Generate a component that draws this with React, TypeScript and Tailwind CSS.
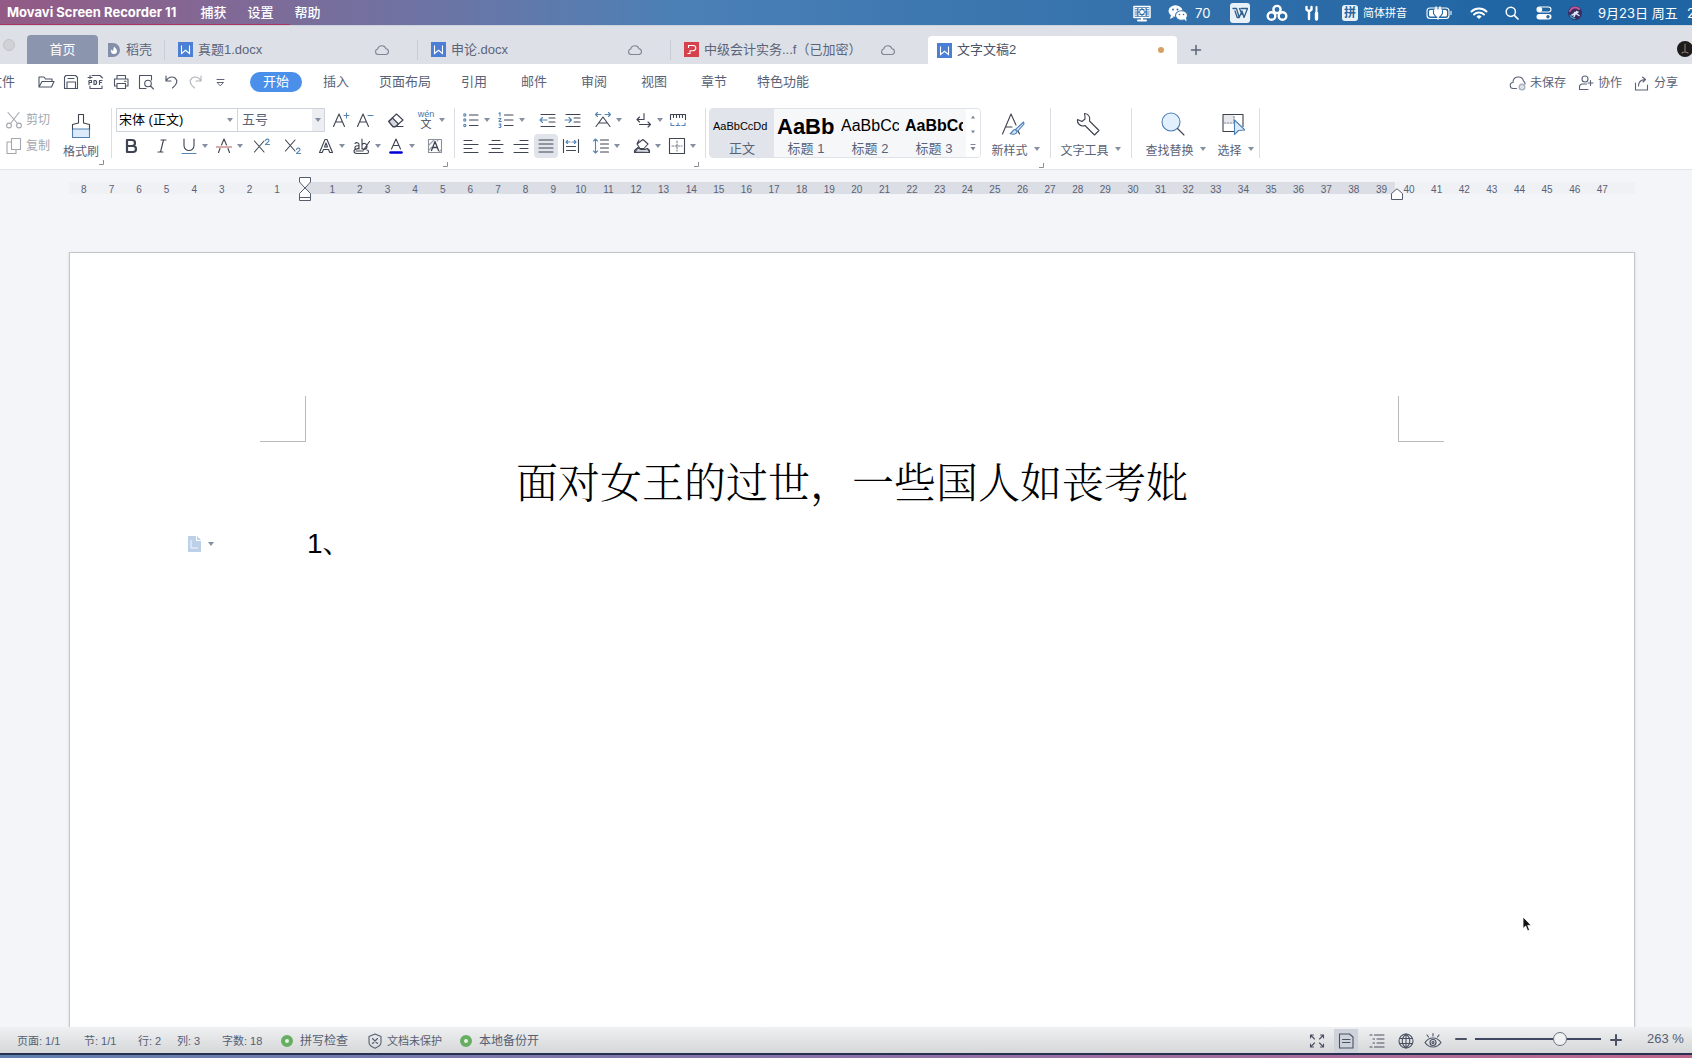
import type { ReactNode } from "react";

type IconProps = {
  children: ReactNode;
  box?: string;
  className?: string;
};

function Icon({ children, box = "0 0 18 18", className = "size-[18px]" }: IconProps) {
  return (
    <svg
      viewBox={box}
      className={`shrink-0 ${className}`}
      fill="none"
      stroke="currentColor"
      strokeWidth="1.1"
      strokeLinecap="round"
      strokeLinejoin="round"
      aria-hidden="true"
    >
      {children}
    </svg>
  );
}

function Caret() {
  return (
    <svg viewBox="0 0 8 6" className="ml-[3px] w-2 h-1.5 shrink-0" aria-hidden="true">
      <path d="M1 1h6L4 5z" fill="#8790a3" />
    </svg>
  );
}

function Corner() {
  return (
    <svg viewBox="0 0 5 5" className="size-[5px]" fill="none" stroke="#8a8f9a" aria-hidden="true">
      <path d="M4.500 0v4.500H0" />
    </svg>
  );
}

type ToolProps = {
  label: string;
  width: string;
  caret?: boolean;
  children: ReactNode;
};

function Tool({ label, width, caret, children }: ToolProps) {
  return (
    <button aria-label={label} className={`flex h-6 shrink-0 items-center ${width}`}>
      <Icon>{children}</Icon>
      {caret && <Caret />}
    </button>
  );
}

function Cloud() {
  return (
    <Icon box="0 0 16 12" className="h-3 w-4 text-[#7f8594]">
      <path d="M4 10.500a2.800 2.800 0 0 1-.3-5.500A4.300 4.300 0 0 1 12 4.800a2.900 2.900 0 0 1 .2 5.700z" />
    </Icon>
  );
}

function DocBadge({ pdf }: { pdf?: boolean }) {
  return (
    <svg viewBox="0 0 15 15" className="size-[15px] shrink-0" fill="none" stroke="#fff" strokeWidth="1.100" aria-hidden="true">
      <rect width="15" height="15" fill={pdf ? "#d5424b" : "#4b7fd6"} stroke="none" />
      {pdf ? (
        <path d="M4.500 6V3.500h4.700a2.600 2.600 0 0 1 0 5.200H6v2.800H3.500" />
      ) : (
        <path d="M3.500 3.500v8l4-3.200 4 3.200v-8" />
      )}
    </svg>
  );
}

function MenuBar() {
  return (
    <header className="flex h-[25px] shrink-0 items-center overflow-hidden bg-linear-to-r from-[#935a85] via-[#4a80b6] via-40% to-[#1f65a3] to-90% font-['Inter','Noto_Sans_CJK_SC',sans-serif] text-[13px] leading-6 text-white">
      <nav className="flex h-full w-[290px] shrink-0 items-center gap-5 border-b border-[#a8375f] pl-[7px] whitespace-nowrap">
        <button className="w-[173px] shrink-0 text-left font-bold">Movavi Screen Recorder 11</button>
        <button className="w-[27px] shrink-0 font-medium">捕获</button>
        <button className="w-[27px] shrink-0 font-medium">设置</button>
        <button className="w-[27px] shrink-0 font-medium">帮助</button>
      </nav>
      <div className="ml-auto flex shrink-0 items-center">
        <div className="w-[36px]">
          <Icon box="0 0 20 18" className="h-[18px] w-5">
            <path d="M2 2.500h16v11H2z" strokeWidth="1.500" />
            <path d="M4 4v8.500M16 4v8.500" strokeDasharray="1.200 1" strokeWidth="2.500" strokeLinecap="butt" />
            <path d="M7 7V4.500h2m2 0h2V7m0 2v2.500h-2m-2 0H7V9" />
            <circle cx="10" cy="8" r="2" fill="#fff" stroke="none" />
            <path d="M10 14v2M6 16.500h8" strokeWidth="2" />
          </Icon>
        </div>
        <div className="flex w-[62px] items-center gap-[7px]">
          <Icon box="0 0 20 18" className="h-[18px] w-5">
            <ellipse cx="7.500" cy="7" rx="7" ry="5.800" fill="#fff" stroke="none" />
            <path d="M3 11l-1 4 4-2z" fill="#fff" stroke="none" />
            <ellipse cx="13.500" cy="11.500" rx="6" ry="4.800" fill="#fff" stroke="#3a76ad" />
            <path d="M16 15l2.500 2.500-.5-4z" fill="#fff" stroke="none" />
            <g fill="#2d6ea8" stroke="none">
              <circle cx="5" cy="5.500" r="1" />
              <circle cx="9.500" cy="5.500" r="1" />
              <circle cx="11.500" cy="10.500" r=".8" />
              <circle cx="15.500" cy="10.500" r=".8" />
            </g>
          </Icon>
          <span>70</span>
        </div>
        <div className="w-[36px]">
          <Icon box="0 0 20 20" className="size-5">
            <rect width="20" height="20" rx="3" fill="#e9f1f8" stroke="none" />
            <path d="M3 5.500h3.500l2.700 9 2.800-6.500 2 6.500 3.500-9H11M5 8l2.200 6.500h2M9.500 5.500l2.500 6" stroke="#2f5f8c" strokeWidth="1.300" />
          </Icon>
        </div>
        <div className="w-[38px]">
          <Icon box="0 0 22 18" className="h-[18px] w-[22px]">
            <g strokeWidth="2.400">
              <circle cx="11" cy="5.500" r="3.600" />
              <circle cx="5.500" cy="12" r="3.800" />
              <circle cx="16.500" cy="12" r="3.800" />
            </g>
          </Icon>
        </div>
        <div className="w-[38px]">
          <Icon box="0 0 16 16" className="size-4">
            <path d="M2.500 2v2.500L5 6.500l2.500-2V2M5 6.500V14" strokeWidth="2.400" />
            <path d="M12.500 2v4" strokeWidth="2" />
            <path d="M12.500 8v6" strokeWidth="3.400" />
          </Icon>
        </div>
        <div className="flex w-[84px] items-center gap-[5px] text-[11px] whitespace-nowrap">
          <span className="flex size-4 items-center justify-center rounded-[3px] bg-[#e9f1f8] text-[12px] font-bold text-[#24659f]">拼</span>
          <span>简体拼音</span>
        </div>
        <div className="w-[44px]">
          <Icon box="0 0 27 14" className="h-3.5 w-[27px]">
            <rect x="1" y="2" width="22" height="10.500" rx="3" />
            <rect x="3" y="4" width="18" height="6.500" rx="1.500" fill="#fff" stroke="none" />
            <path d="M10 1v3M14 1v3M8.500 4h7v2.500L13.500 9.500h-3L8.500 6.500zM12 9v4" fill="#fff" stroke="#fff" strokeWidth="1.500" />
            <path d="M7.500 4.500v3l2.500 3.500M16.500 4.500v3l-2.500 3.500" stroke="#24659f" />
            <path d="M25 5.500v3" />
          </Icon>
        </div>
        <div className="w-[35px]">
          <Icon box="0 0 18 14" className="h-3.5 w-[18px]">
            <path d="M1.500 5.500a11 11 0 0 1 15 0M4 8.500a7.300 7.300 0 0 1 10 0" strokeWidth="2" />
            <path d="M9 13l-2.600-2.500a3.800 3.800 0 0 1 5.200 0z" fill="#fff" stroke="none" />
          </Icon>
        </div>
        <div className="w-[31px]">
          <Icon box="0 0 14 14" className="size-3.5">
            <circle cx="5.800" cy="5.800" r="4.600" strokeWidth="1.500" />
            <path d="M9.300 9.300L13 13" strokeWidth="1.700" />
          </Icon>
        </div>
        <div className="w-[32px]">
          <Icon box="0 0 16 14" className="h-3.5 w-4">
            <rect x="1" y="1" width="14" height="5" rx="2.500" />
            <circle cx="3.700" cy="3.500" r="2" fill="#fff" />
            <rect x=".5" y="8" width="15" height="5.500" rx="2.700" fill="#fff" stroke="none" />
            <circle cx="12" cy="10.700" r="1.700" fill="#24659f" stroke="none" />
          </Icon>
        </div>
        <div className="w-[30px]">
          <Icon box="0 0 14 14" className="size-3.5">
            <circle cx="7" cy="7" r="7" fill="#3a2c5e" stroke="none" />
            <path d="M2 5a5.500 5.500 0 0 1 9-2" stroke="#c9569a" strokeWidth="2" />
            <path d="M4 9l6-3M6 10.500l2.500-5M6.500 6.500l4.500 3" stroke="#dfeafc" strokeWidth="1.500" />
            <path d="M2 9.500a5.500 5.500 0 0 0 5 3" stroke="#41a7d8" />
          </Icon>
        </div>
        <span className="w-[89px] shrink-0 whitespace-nowrap">9月23日 周五</span>
        <span className="w-[5px] overflow-hidden">2</span>
      </div>
    </header>
  );
}

const openTabs = [
  { name: "真题1.docx" },
  { name: "申论.docx" },
  { name: "中级会计实务...f（已加密）", pdf: true },
];

function TabBar() {
  return (
    <div className="flex h-[39px] shrink-0 items-end overflow-hidden border-t border-[#cdd3dd] bg-[#dde0e7] text-[13px] text-[#5c6479]">
      <div className="flex w-[27px] shrink-0 items-center self-stretch pl-[3px]">
        <span className="size-3 rounded-full border border-[#c0c2c8] bg-[#d0d2d7]" />
      </div>
      <button className="h-[29px] w-[71px] shrink-0 rounded-t bg-[#8c95ae] text-white">首页</button>
      <button className="flex h-[29px] w-[66px] shrink-0 items-center gap-1.5 pl-2.5">
        <svg viewBox="0 0 12 14" className="h-3.5 w-3 shrink-0" aria-hidden="true">
          <path d="M0 0h5a7 7 0 0 1 0 14H0z" fill="#8490aa" />
          <path d="M6 3.500c1.500 1.500 3 3 3 4.500a3 3 0 0 1-6 0V6.500L5 8z" fill="#fff" />
        </svg>
        稻壳
      </button>
      {openTabs.map((tab) => (
        <div key={tab.name} className="flex h-[29px] w-[253px] shrink-0 items-center">
          <span className="h-5 w-px bg-[#c9cdd6]" />
          <button className="flex flex-1 items-center gap-[5px] pl-[13px] whitespace-nowrap">
            <DocBadge pdf={tab.pdf} />
            {tab.name}
          </button>
          <span className="pr-[27px]">
            <Cloud />
          </span>
        </div>
      ))}
      <div className="ml-[5px] flex h-7 w-[249px] shrink-0 items-center rounded-t bg-white pl-[9px]">
        <button className="flex flex-1 items-center gap-[5px] whitespace-nowrap text-[#4d5467]">
          <DocBadge />
          文字文稿2
        </button>
        <span className="mr-[13px] size-1.5 rounded-full bg-[#d8a062]" />
      </div>
      <button aria-label="新建标签" className="flex h-[29px] w-[38px] shrink-0 items-center justify-center">
        <Icon box="0 0 12 12" className="size-3">
          <path d="M6 1.500v9M1.500 6h9" strokeWidth="1.500" />
        </Icon>
      </button>
      <div className="ml-auto flex w-[15px] shrink-0 self-stretch overflow-hidden pt-[15px]">
        <Icon box="0 0 16 16" className="size-4">
          <circle cx="8" cy="8" r="8" fill="#1d1b1b" stroke="none" />
          <path d="M8 3v8M5 12c2-2 4-1 6 0" stroke="#8d7c6c" />
        </Icon>
      </div>
    </div>
  );
}

const menus = [
  { name: "插入", width: "w-[60px]" },
  { name: "页面布局", width: "w-[78px]" },
  { name: "引用", width: "w-[60px]" },
  { name: "邮件", width: "w-[60px]" },
  { name: "审阅", width: "w-[60px]" },
  { name: "视图", width: "w-[60px]" },
  { name: "章节", width: "w-[60px]" },
  { name: "特色功能", width: "w-[78px]" },
];

function MenuRow() {
  return (
    <div className="flex h-9 shrink-0 items-center overflow-hidden text-[13px] text-[#5a6277]">
      <button className="-ml-[11px] w-12 shrink-0 text-left">文件</button>
      <div className="flex w-[209px] shrink-0 text-[#4d5466]">
        <Tool label="打开" width="w-[25px]">
          <path d="M2 14V4h5l1.500 2H15v2.500M2 14l3-5.500h12L14.500 14z" />
        </Tool>
        <Tool label="保存" width="w-[25px]">
          <path d="M2.500 4l1.500-1.500h9.500l2 2v11h-13zM5 15.500V9h8.500v6.500M6 5.500h6" />
        </Tool>
        <Tool label="输出为PDF" width="w-[25px]">
          <path d="M5 2.500h8l2.500 2.500M3 13v2.500h12V13M1 4.500h4M3 2.500v3" />
          <path d="M2 11.500V7.500h2.500v2H2M7 7.500v4h1.500l1-1v-2l-1-1zM12.500 11.500v-4H15M12.500 9.500h2" strokeWidth="1.200" />
        </Tool>
        <Tool label="打印" width="w-[25px]">
          <path d="M5 6V2.500h8.500V6M5 13H2.500V6H16v7h-2.500M5 10.500h8.500v5H5zM12.500 8.200h1.500" />
        </Tool>
        <Tool label="打印预览" width="w-[25px]">
          <path d="M9 15.500H2.500v-13h12V7" />
          <circle cx="11" cy="10.500" r="3.300" />
          <path d="M13.500 13l3 3" />
        </Tool>
        <Tool label="撤销" width="w-[25px]">
          <path d="M4 3v5h5M4 8c2-4 6-5 9-3 3 2.500 2.500 6-2.500 10" />
        </Tool>
        <div className="flex text-[#b0b3ba]">
          <Tool label="恢复" width="w-[25px]">
            <path d="M14 3v5H9M14 8c-2-4-6-5-9-3-3 2.500-2.500 6 2.500 10" />
          </Tool>
        </div>
        <Tool label="自定义快速访问工具栏" width="w-[25px]">
          <path d="M5 6.500h7M5.500 9.500h6l-3 3z" strokeWidth=".9" />
        </Tool>
      </div>
      <nav className="flex shrink-0 items-center whitespace-nowrap">
        <button className="mx-1 h-5 w-[52px] rounded-full bg-[#4a90ea] text-white">开始</button>
        {menus.map((menu) => (
          <button key={menu.name} className={menu.width}>
            {menu.name}
          </button>
        ))}
      </nav>
      <div className="ml-auto flex shrink-0 gap-[11px] pt-0.5 pr-3.5 text-[12px] whitespace-nowrap">
        <button className="flex items-center gap-[3px]">
          <Icon>
            <path d="M7.500 14.500H4.500a3 3 0 0 1-.500-6C4 2 13 1 14.500 7a3.400 3.400 0 0 1 1.500 3" />
            <circle cx="13" cy="13" r="3.500" fill="#a9b0bf" stroke="none" />
            <circle cx="13" cy="13" r="1.300" stroke="#fff" />
          </Icon>
          未保存
        </button>
        <button className="flex items-center gap-[3px]">
          <Icon>
            <circle cx="8" cy="5" r="3" />
            <path d="M11 15.500H2.500V13c0-2 1.500-3 3-3h4M13.500 6.500v5M11 9h5" />
          </Icon>
          协作
        </button>
        <button className="flex items-center gap-[3px]">
          <Icon>
            <path d="M2.500 9v7h12v-5M5.500 12c0-4 2.500-6.500 7-6.500M9.500 3l3 2.500L10 8" />
          </Icon>
          分享
        </button>
      </div>
    </div>
  );
}

const styleCells = [
  { name: "正文", sample: "text-[11px]", text: "AaBbCcDd", active: true },
  { name: "标题 1", sample: "text-[22px] font-bold", text: "AaBb" },
  { name: "标题 2", sample: "text-[16px]", text: "AaBbCc" },
  { name: "标题 3", sample: "text-[16px] font-bold", text: "AaBbCc" },
];

function BigTool({ label, width, children }: { label: string; width: string; children: ReactNode }) {
  return (
    <button className={`flex shrink-0 flex-col gap-1.5 pt-1 ${width}`}>
      <span className="flex w-full justify-center pr-1.5">
        <Icon box="0 0 24 24" className="size-6">
          {children}
        </Icon>
      </span>
      <span className="flex w-full items-center justify-center text-[12px] leading-[18px] whitespace-nowrap">
        {label}
        <span className="flex pb-1 pl-0.5">
          <Caret />
        </span>
      </span>
    </button>
  );
}

function Divider() {
  return <span className="h-[50px] w-px shrink-0 bg-[#dcdee3]" />;
}

function Ribbon() {
  return (
    <div className="flex h-[70px] shrink-0 overflow-hidden border-b border-[#e3e5ea] pt-2 text-[#3f4452]">
      <div className="flex w-[111px] shrink-0 pl-[5px]">
        <div className="flex w-[58px] flex-col gap-0.5 text-[12px] text-[#a3a6ad]">
          <button className="flex h-6 items-center gap-[3px] whitespace-nowrap">
            <Icon>
              <path d="M3 1.500L12.500 12.500M14 1.500L5.500 12.500" />
              <circle cx="4" cy="14.500" r="2.400" />
              <circle cx="14" cy="14.500" r="2.400" />
            </Icon>
            剪切
          </button>
          <button className="flex h-6 items-center gap-[3px] whitespace-nowrap">
            <Icon>
              <path d="M6.500 1.500h9v11h-9zM6.500 5H2v11.500h9v-4" />
            </Icon>
            复制
          </button>
        </div>
        <button className="flex w-9 flex-col items-center gap-1 pt-[5px] text-[12px] leading-[18px] whitespace-nowrap text-[#5a6277]">
          <Icon box="0 0 20 26" className="h-[26px] w-5 text-[#3d424d]">
            <path d="M1.500 16h17v8.500h-17z" fill="#dcebfa" stroke="#4f7fb5" />
            <path d="M1.500 16v-4.500l6-1.500V1.500h5V10l6 1.500V16" />
          </Icon>
          格式刷
        </button>
        <div className="self-end pb-1">
          <Corner />
        </div>
      </div>
      <Divider />

      <div className="flex w-[342px] shrink-0 flex-col gap-0.5 pl-1">
        <div className="flex h-6 items-center">
          <div className="mr-[7px] flex h-6 w-[209px] shrink-0 items-center border border-[#cfd3db] text-[13px]">
            <select aria-label="字体" className="h-full w-[106px] appearance-none pl-0.5 text-black outline-none">
              <option>宋体 (正文)</option>
            </select>
            <Caret />
            <select aria-label="字号" className="ml-[3px] h-full min-w-0 flex-1 appearance-none border-l border-[#cfd3db] pl-1 text-[#5a6277] outline-none">
              <option>五号</option>
            </select>
            <span className="flex h-full w-3 items-center bg-[#eceef2]">
              <span className="-ml-px flex">
                <Caret />
              </span>
            </span>
          </div>
          <Tool label="增大字号" width="w-[24px]">
            <path d="M1.500 15.500L7 3l5.500 12.500M3.500 11h7" />
            <path d="M12 4.500h5M14.500 2v5" stroke="#5585b5" />
          </Tool>
          <Tool label="减小字号" width="w-[31px]">
            <path d="M1.500 15.500L7 3l5.500 12.500M3.500 11h7" />
            <path d="M12 4.500h5" stroke="#5585b5" />
          </Tool>
          <Tool label="清除格式" width="w-[30px]">
            <path d="M1.500 10.500l8-7.500 6.500 6-8 7H6zM10 15.500h6" />
            <path d="M5.500 7l6 6-3 2.500H6L2 10.500z" fill="#d5d8de" />
          </Tool>
          <button aria-label="拼音指南" className="flex h-6 w-[30px] shrink-0 items-center">
            <span className="flex w-[18px] flex-col items-center text-[9px] leading-[9px]">
              <span className="text-[#3f78ac]">wén</span>
              <span className="text-[11px] leading-[11px]">文</span>
            </span>
            <Caret />
          </button>
        </div>
        <div className="flex h-6 pl-[6px]">
          <Tool label="加粗" width="w-[31px]">
            <path d="M5 3h5a3 3 0 0 1 0 6H5zM5 9h6a3 3 0 0 1 0 6H5z" strokeWidth="2.200" />
          </Tool>
          <Tool label="倾斜" width="w-[27px]">
            <path d="M8 3h5M5 15h5M10.500 3l-3 12" />
          </Tool>
          <Tool label="下划线" width="w-[35px]" caret>
            <path d="M4 2v6.500a4.800 4.800 0 0 0 10 0V2" />
            <path d="M2 16.500h14" stroke="#5585b5" />
          </Tool>
          <Tool label="删除线" width="w-[38px]" caret>
            <path d="M3.500 15.500L5 11.500M6.500 8L9 2l2.500 6M13 11.500l1.500 4" />
            <path d="M1.500 10h15" stroke="#b4585d" />
          </Tool>
          <Tool label="上标" width="w-[31px]">
            <path d="M1.500 4l9.500 11M11 4L1.500 15" />
            <path d="M12.500 3.500c.5-2 3.500-1.700 3.500.2 0 1.200-2 2-3.500 3.800h4" stroke="#5585b5" />
          </Tool>
          <Tool label="下标" width="w-[33px]">
            <path d="M1.500 3l9.500 11M11 3L1.500 14" />
            <path d="M12.500 12.500c.5-2 3.500-1.700 3.500.2 0 1.200-2 2-3.500 3.800h4" stroke="#5585b5" />
          </Tool>
          <Tool label="文字效果" width="w-[36px]" caret>
            <path d="M2.500 15.500L8 2.500h2l5.500 13h-2.700l-1.300-3h-5l-1.300 3zM7.500 10h3L9 6z" />
          </Tool>
          <Tool label="突出显示" width="w-[34px]" caret>
            <path d="M2 6.500c1-1.500 4-1 4 1V12M6 8.500C1 8.500 1 12 3.500 12 5 12 6 11 6 10M9 2v10M9 8c1-2.500 5-2 5 1.500S10 13 9 11M16.500 4.500L10.500 13M3 14h7M4 12c-4 0-4 4.500 0 4.500h10c2 0 2-3.500 0-3.500" />
          </Tool>
          <Tool label="字体颜色" width="w-[39px]" caret>
            <path d="M4.500 12L9 2l4.500 10M6 8.500h6" />
            <path d="M3.500 15.500h11" stroke="#0000d6" strokeWidth="2.600" />
          </Tool>
          <Tool label="字符底纹" width="w-[18px]">
            <path d="M2.500 2.500h13v13h-13z" stroke="#8b909b" />
            <path d="M3 8l5-5M3 13l3-3M13 15l2-2M11 4l1-1" stroke="#9ba0ab" />
            <path d="M5.500 13.500L9 4.500l3.500 9M7 10.500h4" strokeWidth="1.300" />
          </Tool>
        </div>
        <div className="flex justify-end pt-0.5 pr-1.5">
          <Corner />
        </div>
      </div>
      <Divider />

      <div className="flex w-[250px] shrink-0 flex-col gap-0.5 pl-[7px]">
        <div className="flex h-6">
          <Tool label="项目符号" width="w-[35px]" caret>
            <path d="M7.500 4H16M7.500 9H16M7.500 14.500H16" />
            <g stroke="#5585b5">
              <circle cx="2.800" cy="4" r="1.100" />
              <circle cx="2.800" cy="9" r="1.100" />
              <circle cx="2.800" cy="14.500" r="1.100" />
            </g>
          </Tool>
          <Tool label="编号" width="w-[41px]" caret>
            <path d="M7.500 4H16M7.500 9H16M7.500 14.500H16" />
            <path d="M2 2.500l1-.8V5M1.800 7.500H4l-2 3h2.200M2 13h2l-1 1.500 1 .500-.500 1.500H2" stroke="#5585b5" />
          </Tool>
          <Tool label="减少缩进" width="w-[25px]">
            <path d="M3 3.500h14M11 7h6M11 11h6M3 15.500h14" />
            <path d="M9 9H2M4.500 6.500L2 9l2.500 2.500" stroke="#5585b5" />
          </Tool>
          <Tool label="增加缩进" width="w-[31px]">
            <path d="M3 3.500h14M11 7h6M11 11h6M3 15.500h14" />
            <path d="M2 9h6M6 6.500L8.500 9 6 11.500" stroke="#5585b5" />
          </Tool>
          <Tool label="中文版式" width="w-[41px]" caret>
            <path d="M2 15.500L9 6l7 9.500M5 12h8" />
            <path d="M7 3.500H1.500m2-2l-2 2 2 2M11 3.500h5.500m-2-2l2 2-2 2" stroke="#5585b5" />
          </Tool>
          <Tool label="换行" width="w-[34px]" caret>
            <path d="M9 2.500v6H2m2.500-2.500L2 8.500 4.500 11M4.500 13.500h11M13 11l2.500 2.500L13 16" />
          </Tool>
          <Tool label="标尺" width="w-[18px]">
            <path d="M1.500 8.500V3.500h15v5M4.500 4v2.500M7.500 4v2.500M10.500 4v2.500M13.500 4v2.500" />
            <path d="M2 12v2.500h3M16 12v2.500h-3M7 14.500h4M9 12v2" stroke="#5585b5" />
          </Tool>
        </div>
        <div className="flex h-6">
          <Tool label="左对齐" width="w-[25px]">
            <path d="M2 3.500h8M2 7.500h14M2 11.500h8M2 15.500h14" />
          </Tool>
          <Tool label="居中对齐" width="w-[25px]">
            <path d="M5 3.500h8M2 7.500h14M5 11.500h8M2 15.500h14" />
          </Tool>
          <Tool label="右对齐" width="w-[22px]">
            <path d="M8 3.500h8M2 7.500h14M8 11.500h8M2 15.500h14" />
          </Tool>
          <button aria-label="两端对齐" className="mr-1 flex size-6 shrink-0 items-center justify-center rounded bg-[#e1e4ea]">
            <Icon>
              <path d="M2 3h14M2 7h14M2 11h14M2 15h14" />
            </Icon>
          </button>
          <Tool label="分散对齐" width="w-[30px]">
            <path d="M1.500 2.500v13M16.500 2.500v13M4.500 9.500h9M4.500 13.500h9" />
            <path d="M8 5H4m1.500-1.500L4 5l1.500 1.500M10 5h4m-1.500-1.500L14 5l-1.500 1.500" stroke="#5585b5" />
          </Tool>
          <Tool label="行距" width="w-[41px]" caret>
            <path d="M8.500 3h8M8.500 7h8M8.500 11h8M8.500 15h8" />
            <path d="M3.500 2v14M1.500 4l2-2 2 2M1.500 14l2 2 2-2" stroke="#5585b5" />
          </Tool>
          <Tool label="底纹颜色" width="w-[35px]" caret>
            <path d="M4 7l6-4.500L15 7l-4 4.500H7zM4 7l2-4M1.500 15.500h15v-2l-2-2M1.500 15.500v-2L5 10.500" />
            <path d="M2 15l3-4 3 1.500h4l2-1 2 2v2z" fill="#d5d8de" />
          </Tool>
          <Tool label="边框" width="w-[29px]" caret>
            <path d="M1.500 1.500h15v15h-15z" />
            <path d="M9 4v10M4 9h10" strokeDasharray="1.500 1.500" stroke="#777c88" />
          </Tool>
        </div>
        <div className="flex justify-end pt-0.5 pr-1.5">
          <Corner />
        </div>
      </div>
      <Divider />

      <div className="ml-[3px] flex h-[50px] w-[272px] shrink-0 overflow-hidden rounded border border-[#dfe2e8] bg-[#f6f7f9]">
        {styleCells.map((cell) => (
          <button
            key={cell.name}
            className={`flex w-16 shrink-0 flex-col items-center px-[3px] ${cell.active ? "bg-[#e1e4ea]" : ""}`}
          >
            <span className={`flex h-8 w-full items-center overflow-hidden pt-0.5 whitespace-nowrap text-black ${cell.sample}`}>
              {cell.text}
            </span>
            <span className="text-[13px] leading-4 text-[#5a6277]">{cell.name}</span>
          </button>
        ))}
        <div className="flex flex-1 flex-col items-center justify-around bg-white">
          <button aria-label="上一行">
            <svg viewBox="0 0 8 6" className="h-1.5 w-2" aria-hidden="true">
              <path d="M2 4.500h4L4 1.500z" fill="#7e8596" />
            </svg>
          </button>
          <button aria-label="下一行">
            <svg viewBox="0 0 8 6" className="h-1.5 w-2" aria-hidden="true">
              <path d="M2 1.500h4L4 4.500z" fill="#7e8596" />
            </svg>
          </button>
          <button aria-label="更多样式">
            <svg viewBox="0 0 8 8" className="size-2" aria-hidden="true">
              <path d="M1.500 0h5v1h-5zM1.500 3h5L4 6.500z" fill="#7e8596" />
            </svg>
          </button>
        </div>
      </div>

      <div className="flex w-[69px] shrink-0 flex-col items-end pr-1.5 text-[#5a6277]">
        <BigTool label="新样式" width="w-[56px]">
          <path d="M1.500 22L10 2l5 11M4.500 15H11M17 19l1.500 3" stroke="#3d424d" />
          <path d="M22.500 10l-8 7.500 2 2L23 12zM14 17.500c-3 0-2 3.500-5 4 3 1.500 7.500.500 7-2.500z" fill="#cfe3f8" stroke="#4f7fb5" />
        </BigTool>
        <div className="flex pt-[3px]">
          <Corner />
        </div>
      </div>
      <Divider />
      <div className="flex w-20 shrink-0 justify-center text-[#5a6277]">
        <BigTool label="文字工具" width="w-[76px]">
          <path d="M8.500 1.500a5.500 5.500 0 0 1 5 7.500L23 18.500 18.500 23 9 13.500A5.500 5.500 0 0 1 1.500 7.500L6 9.500 9 7V5z" stroke="#3d424d" />
        </BigTool>
      </div>
      <Divider />
      <div className="flex w-[127px] shrink-0 gap-[3px] pl-2 text-[#5a6277]">
        <BigTool label="查找替换" width="w-[72px]">
          <circle cx="10" cy="10" r="9" fill="#e2effc" stroke="#4f7fb5" />
          <path d="M16.500 16.500L23 23" stroke="#3d424d" />
        </BigTool>
        <BigTool label="选择" width="w-[42px]">
          <path d="M2 2.500h11v8H2z" fill="#e6e8ec" stroke="none" />
          <path d="M13 19.500H2v-17h20v12" stroke="#3d424d" />
          <path d="M3 11h10V3" stroke="#777c88" strokeDasharray="1.500 1.500" />
          <path d="M13.500 8v14.500l4-4 6.500-.500z" fill="#dcebfa" stroke="#4f7fb5" />
        </BigTool>
      </div>
      <Divider />
    </div>
  );
}

const leftMarks = [8, 7, 6, 5, 4, 3, 2, 1];
const rightMarks = Array.from({ length: 47 }, (_, i) => i + 1);

function Ruler() {
  return (
    <div className="mr-[57px] ml-[69px] flex h-3 shrink-0 bg-[#eff1f4] pr-[19px] pl-px text-center text-[10px] leading-4 text-[#5a6277]">
      {leftMarks.map((n) => (
        <span key={n} className="flex-1 basis-0">
          {n}
        </span>
      ))}
      <span className="relative flex flex-1 basis-0">
        <span className="w-1/2" />
        <span className="w-1/2 bg-[#dbdee4]" />
        <svg viewBox="0 0 12 26" className="absolute -top-1.5 left-1/2 h-[26px] w-3 -translate-x-1/2" fill="#fff" stroke="#555c6c" aria-hidden="true">
          <path d="M.5 1.500h11V6L6 12 .5 6zM6 12l5.500 5.500v7H.5v-7zM.5 21.500h11" />
        </svg>
      </span>
      {rightMarks.map((n) => (
        <span key={n} className={`relative flex-1 basis-0 ${n < 40 ? "bg-[#dbdee4]" : ""}`}>
          {n}
          {n === 39 && (
            <svg viewBox="0 0 12 12" className="absolute top-1.5 -right-2 z-10 size-3" fill="#fff" stroke="#555c6c" aria-hidden="true">
              <path d="M.5 11.500V5.500L6 .8l5.500 4.700v6z" />
            </svg>
          )}
        </span>
      ))}
    </div>
  );
}

function DocumentPage() {
  return (
    <main className="mt-[58px] mr-[57px] ml-[69px] min-h-0 flex-1 overflow-hidden border-x border-t border-[#c3c6cb] bg-white text-black shadow">
      <div className="flex justify-between px-[190px] pt-[143px]">
        <span className="size-[46px] border-r border-b border-[#b9b9b9]" />
        <span className="size-[46px] border-b border-l border-[#b9b9b9]" />
      </div>
      <h1 className="mt-1.5 text-center font-['Songti_SC','Noto_Serif_CJK_SC','Noto_Sans_CJK_SC',serif] text-[42px] leading-[64px] font-light whitespace-nowrap">
        面对女王的过世，一些国人如丧考妣
      </h1>
      <div className="mt-2 flex h-12 items-center pl-[118px]">
        <button aria-label="段落布局" className="flex w-[119px] shrink-0 items-center gap-[3px]">
          <svg viewBox="0 0 13 16" className="h-4 w-[13px]" aria-hidden="true">
            <path d="M0 0h8v5h5v11H0z" fill="#bcd0e8" />
            <path d="M9 0l4 4H9z" fill="#bcd0e8" />
            <path d="M3 4v8h7" stroke="#f4f8fd" fill="none" />
          </svg>
          <Caret />
        </button>
        <p className="font-['Liberation_Sans','Noto_Serif_CJK_SC','Noto_Sans_CJK_SC',sans-serif] text-[28px] leading-8 whitespace-nowrap">
          1、
        </p>
      </div>
    </main>
  );
}

function GreenDot() {
  return <span className="size-3 shrink-0 rounded-full border-4 border-[#67ae63] bg-[#e5f4e1]" />;
}

function StatusBar() {
  return (
    <footer className="flex h-[26px] shrink-0 items-center bg-linear-to-b from-[#eef0f2] to-[#d5d7d9] pt-0.5 pl-[17px] text-[11px] whitespace-nowrap text-[#565e73]">
      <span className="w-[67px] shrink-0">页面: 1/1</span>
      <span className="w-[54px] shrink-0">节: 1/1</span>
      <span className="w-[39px] shrink-0">行: 2</span>
      <span className="w-[45px] shrink-0">列: 3</span>
      <span className="w-[59px] shrink-0">字数: 18</span>
      <button className="flex w-[87px] shrink-0 items-center gap-[7px] text-[12px]">
        <GreenDot />
        拼写检查
      </button>
      <button className="flex w-[92px] shrink-0 items-center gap-[5px]">
        <Icon box="0 0 14 16" className="h-4 w-3.5">
          <path d="M7 1l6 2.500v6C13 12 10 14 7 15.200 4 14 1 12 1 9.500v-6zM4.500 5.500l5 5M9.500 5.500l-5 5" />
        </Icon>
        文档未保护
      </button>
      <button className="flex shrink-0 items-center gap-[7px] text-[12px]">
        <GreenDot />
        本地备份开
      </button>

      <div className="ml-auto flex shrink-0 items-center text-[#4a5163]">
        <button aria-label="全屏显示" className="w-[26px]">
          <Icon>
            <path d="M6.500 7L2.500 3M2.500 6V3h3M11.500 7l4-4M12.500 3h3v3M6.500 11l-4 4M2.500 12v3h3M11.500 11l4 4M15.500 12v3h-3" />
          </Icon>
        </button>
        <button aria-label="页面视图" className="flex size-6 items-center justify-center bg-[#ced2db]">
          <Icon>
            <path d="M2.500 2h10L16 5v11H2.500zM5.500 7.500H13M5.500 10.500H13" />
          </Icon>
        </button>
        <button aria-label="大纲视图" className="ml-2.5 w-[29px]">
          <Icon>
            <path d="M2 3h2M6.500 3H16M5 7h1.500M9 7h7M5 11h1.500M9 11h7M2 15h2M6.500 15H16" />
          </Icon>
        </button>
        <button aria-label="Web版式" className="w-[27px]">
          <Icon>
            <circle cx="9" cy="9" r="7" />
            <path d="M9 2v14M2.500 6.500h13M2.500 11.500h13M9 2C4 6 4 12 9 16M9 2c5 4 5 10 0 14" />
          </Icon>
        </button>
        <button aria-label="护眼模式" className="w-[31px]">
          <Icon>
            <path d="M1 10.500c4-6 12-6 16 0-4 6-12 6-16 0zM9 4V1.500M4.500 5L3 3M13.500 5L15 3" />
            <circle cx="9" cy="10.500" r="3" />
            <circle cx="9" cy="10.500" r="1" />
          </Icon>
        </button>
        <button aria-label="缩小" className="w-5">
          <Icon box="0 0 12 12" className="size-3">
            <path d="M1 4h10" strokeWidth="2" />
          </Icon>
        </button>
        <input
          type="range"
          aria-label="显示比例"
          defaultValue={70}
          className="mb-1 h-4 w-[126px] appearance-none bg-transparent [&::-webkit-slider-runnable-track]:h-0.5 [&::-webkit-slider-runnable-track]:bg-[#3f4860] [&::-webkit-slider-thumb]:-mt-1.5 [&::-webkit-slider-thumb]:size-3.5 [&::-webkit-slider-thumb]:appearance-none [&::-webkit-slider-thumb]:rounded-full [&::-webkit-slider-thumb]:border [&::-webkit-slider-thumb]:border-[#6b7180] [&::-webkit-slider-thumb]:bg-[#f0f1f3]"
        />
        <button aria-label="放大" className="ml-[9px] w-[37px]">
          <Icon box="0 0 12 14" className="h-3.5 w-3">
            <path d="M6 1v10M1 6h10" strokeWidth="2" />
          </Icon>
        </button>
        <span className="w-[45px] pb-1 text-[13px] text-[#565e73]">263 %</span>
      </div>
    </footer>
  );
}

export default function App() {
  return (
    <div className="relative flex h-screen flex-col overflow-hidden bg-white font-['Liberation_Sans','Noto_Sans_CJK_SC',sans-serif]">
      <MenuBar />
      <TabBar />
      <MenuRow />
      <Ribbon />
      <div className="flex min-h-0 flex-1 flex-col overflow-hidden bg-[#f4f5f8] pt-3">
        <Ruler />
        <DocumentPage />
      </div>
      <StatusBar />
      <div className="h-[5px] shrink-0 border-t-2 border-[#26314f] bg-linear-to-r from-[#5f80b0] via-[#8c72aa] to-[#bd668e]" />

      <svg viewBox="0 0 10 16" className="absolute right-[160px] bottom-[126px] h-4 w-2.5" aria-hidden="true">
        <path d="M1 1v11.500l2.700-2.500 1.900 4.800 2-.8-1.900-4.600h3.500z" fill="#111" stroke="#fff" strokeWidth=".8" />
      </svg>
    </div>
  );
}
